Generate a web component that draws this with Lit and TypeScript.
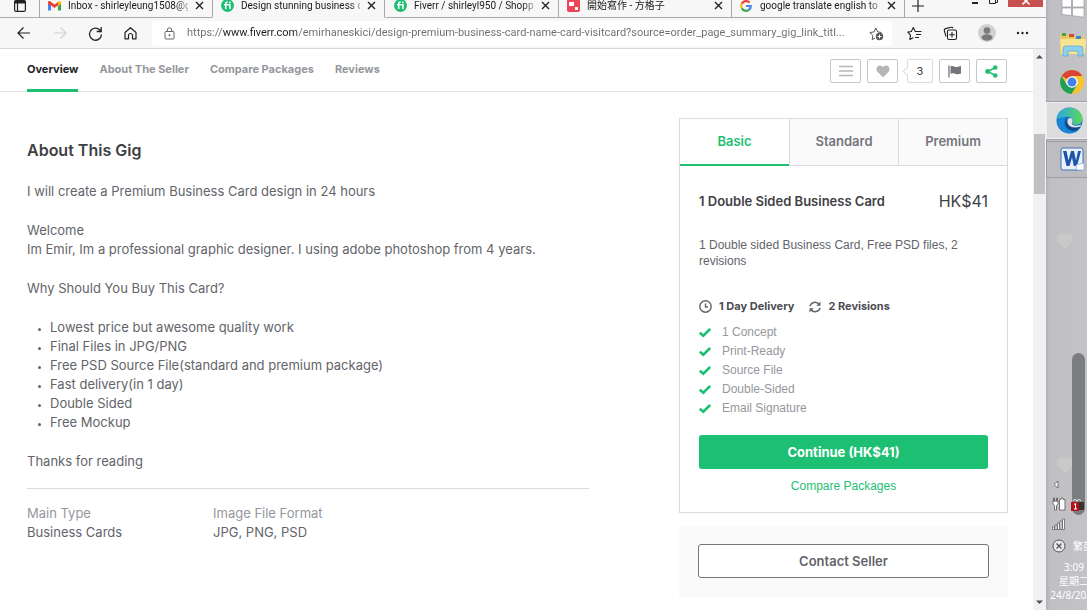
import { LitElement, html, css, svg, nothing } from "lit";
import { customElement, state } from "lit/decorators.js";
import { classMap } from "lit/directives/class-map.js";

const closeIcon = html`<svg width="9" height="9" viewBox="0 0 9 9"><path d="M1 1l7 7M8 1l-7 7" stroke="#222" stroke-width="1.4"/></svg>`;

const fiverrIcon = html`<svg width="13" height="13" viewBox="0 0 13 13"><circle cx="6.5" cy="6.5" r="6.5" fill="#1dbf73"/><path d="M3 5.7h5.900V10M4.700 10V5c0-1.300.6-1.900 2-1.900" fill="none" stroke="#fff" stroke-width="1.500"/><circle cx="8.900" cy="3.400" r=".9" fill="#fff"/></svg>`;

const gmailIcon = html`<svg width="13" height="10" viewBox="0 0 13 10"><path d="M0 1.500V9.500h3V4z" fill="#4285f4"/><path d="M13 1.500V9.500h-3V4z" fill="#34a853"/><path d="M0 1.500C0 .2 1.500-.3 2.500.5L6.500 3.500 10.500.5V4L6.500 7 2.500 4v1L0 3z" fill="#ea4335"/><path d="M10 1l.8-.6C11.800-.3 13 .2 13 1.500V3l-3 2z" fill="#fbbc04"/></svg>`;

const matterIcon = html`<svg width="13" height="13" viewBox="0 0 13 13"><rect width="13" height="13" rx="2" fill="#ee4458"/><path d="M2 3h5v4H2zM8 8h3v3H8z" fill="#fff"/></svg>`;

const googleIcon = html`<svg width="12" height="12" viewBox="0 0 12 12" fill="none" stroke-width="2.200"><path d="M9.600 2.600A4.800 4.800 0 0 0 1.800 3.800" stroke="#ea4335"/><path d="M1.800 3.800a4.800 4.800 0 0 0 0 4.400" stroke="#fbbc05"/><path d="M1.800 8.200a4.800 4.800 0 0 0 7.300 1.500" stroke="#34a853"/><path d="M9.100 9.700A4.800 4.800 0 0 0 10.800 6H6" stroke="#4285f4"/></svg>`;

const tabs = [
  { title: "Inbox - shirleyleung1508@g", icon: gmailIcon },
  { title: "Design stunning business ca", icon: fiverrIcon },
  { title: "Fiverr / shirleyl950 / Shoppin", icon: fiverrIcon },
  { title: "開始寫作 - 方格子", icon: matterIcon },
  { title: "google translate english to t", icon: googleIcon },
];

@customElement("browser-tabs")
export class BrowserTabs extends LitElement {
  static styles = css`
    :host { display: block; }
    .strip { display: flex; height: 18px; overflow: hidden; background: #f7f7f8; font: 10px/16px Roboto, "Noto Sans CJK TC", sans-serif; color: #1b1b1b; }
    .lead, .tab, .rest { box-sizing: border-box; display: flex; align-items: center; border-bottom: 1px solid #ababab; padding-bottom: 6px; }
    .lead { width: 39px; padding-left: 14px; flex: none; }
    .tab { width: 173px; flex: none; padding-left: 8px; padding-right: 8px; border-left: 1px solid #a8a8a8; gap: 7px; }
    .icon { display: flex; flex: none; width: 13px; }
    .title { flex: 1; white-space: nowrap; min-width: 0; -webkit-mask-image: linear-gradient(90deg, #000 108px, transparent 126px); mask-image: linear-gradient(90deg, #000 108px, transparent 126px); }
    .active { border-bottom-color: #f7f7f8; border-right: 1px solid #a8a8a8; }
    .after { border-left-color: transparent; }
    .plain { border: 0; background: none; padding: 0; display: flex; }
    .rest { flex: 1; border-left: 1px solid #a8a8a8; padding-left: 7px; justify-content: space-between; }
    .controls { display: flex; align-items: flex-end; align-self: flex-start; gap: 10px; height: 7px; padding-right: 3px; }
    .close { width: 35px; height: 7px; background: #c75050; border: 0; padding: 0; display: flex; justify-content: center; align-items: flex-start; overflow: hidden; }
  `;
  render() {
    return html`<div class="strip">
      <div class="lead"><button class="plain" aria-label="Tab actions"><svg width="12" height="12" viewBox="0 0 12 12" fill="none" stroke="#222" stroke-width="1.200"><rect x=".6" y=".6" width="10.800" height="10.800" rx="1.500"/><path d="M.6 2h10.800" stroke-width="3"/><path d="M3.500 3v8"/></svg></button></div>
      ${tabs.map((t, i) => html`<div class=${classMap({ tab: true, active: i === 1, after: i === 2 })}>
        <span class="icon">${t.icon}</span><span class="title">${t.title}</span>
        <button class="plain" aria-label="Close tab">${closeIcon}</button></div>`)}
      <div class="rest">
        <button class="plain" aria-label="New tab"><svg width="12" height="12" viewBox="0 0 12 12"><path d="M6 0v12M0 6h12" stroke="#222" stroke-width="1.200"/></svg></button>
        <div class="controls">
          <button class="plain" aria-label="Minimize"><svg width="8" height="6" viewBox="0 0 8 6"><path d="M1 2h6" stroke="#222" stroke-width="2"/></svg></button>
          <button class="plain" aria-label="Restore"><svg width="9" height="11" viewBox="0 0 9 11" fill="none" stroke="#222"><path d="M.5 2.500h6v5h-6zM2.500 2.500v-2h6v6h-2"/></svg></button>
          <button class="close" aria-label="Close"><svg width="8" height="6" viewBox="0 0 8 6"><path d="M.5-2.500l7 7M7.500-2.500l-7 7" stroke="#fff" stroke-width="1.600"/></svg></button>
        </div>
      </div>
    </div>`;
  }
}

@customElement("browser-toolbar")
export class BrowserToolbar extends LitElement {
  static styles = css`
    :host { display: block; }
    .bar { display: flex; align-items: center; height: 30px; background: #f7f7f7; border-bottom: 1px solid #d9d9d9; }
    .group { display: flex; align-items: center; gap: 20px; padding: 0 14px 0 16px; flex: none; }
    .tools { padding: 0 17px 0 15px; }
    button { border: 0; background: none; padding: 0; display: flex; }
    .address { flex: 1; min-width: 0; display: flex; align-items: center; gap: 12px; height: 25px; padding: 0 8px 0 12px; background: #fff; border-radius: 3px; }
    .url { flex: 1; min-width: 0; border: 0; padding: 0; outline: 0; font: 11px/20px Roboto, sans-serif; color: transparent; -webkit-text-fill-color: transparent; background: linear-gradient(90deg, #6c6c6c 36px, #1c1c1c 36px, #1c1c1c 110px, #6c6c6c 110px); -webkit-background-clip: text; background-clip: text; }
  `;
  render() {
    return html`<div class="bar">
      <div class="group">
        <button aria-label="Back"><svg width="16" height="14" viewBox="0 0 16 14" fill="none" stroke="#222" stroke-width="1.200"><path d="M14 7H2M7.500 1.500L2 7l5.500 5.500"/></svg></button>
        <button aria-label="Forward"><svg width="16" height="14" viewBox="0 0 16 14" fill="none" stroke="#d0d0d0" stroke-width="1.200"><path d="M2 7h12M8.500 1.500L14 7l-5.500 5.500"/></svg></button>
        <button aria-label="Refresh"><svg width="15" height="15" viewBox="0 0 15 15" fill="none" stroke="#222" stroke-width="1.300"><path d="M13.200 6.300A6 6 0 1 0 13.500 8.500M13.200 1v4.500H8.700"/></svg></button>
        <button aria-label="Home"><svg width="15" height="15" viewBox="0 0 15 15" fill="none" stroke="#222" stroke-width="1.200"><path d="M2 6.500L7.500 1.700 13 6.500v6.300H9.500V9.500a2 2 0 0 0-4 0v3.300H2z" stroke-linejoin="round"/></svg></button>
      </div>
      <div class="address">
        <svg width="11" height="13" viewBox="0 0 11 13" fill="none" stroke="#666"><rect x="1" y="4.500" width="9" height="7.500" rx="1"/><path d="M3.300 4.500V3a2.200 2.200 0 0 1 4.400 0v1.500"/><circle cx="5.500" cy="8.200" r=".6" fill="#666"/></svg>
        <input class="url" aria-label="Address" readonly value="https://www.fiverr.com/emirhaneskici/design-premium-business-card-name-card-visitcard?source=order_page_summary_gig_link_titl...">
        <button aria-label="Add to favorites"><svg width="15" height="15" viewBox="0 0 15 15" fill="none" stroke="#555"><path d="M6 12.200l-2.800 1.300.6-4L1 6.500l4-.6L6.800 2l1.900 3.900 3.800.6" stroke-linejoin="round"/><circle cx="10.500" cy="10.500" r="3.700" fill="#555" stroke="none"/><path d="M10.500 8.500v4M8.500 10.500h4" stroke="#fff"/></svg></button>
      </div>
      <div class="group tools">
        <button aria-label="Favorites"><svg width="16" height="15" viewBox="0 0 16 15" fill="none" stroke="#222" stroke-width="1.100"><path d="M9 5.500h-.7L6.300 1.500l-2 4-3.500.6 2.700 3-.6 4.400L6.300 11.500M9 5.500h5.500M9 8.500h5M8 11.500h4" stroke-linejoin="round"/></svg></button>
        <button aria-label="Collections"><svg width="15" height="15" viewBox="0 0 15 15" fill="none" stroke="#222" stroke-width="1.100"><rect x="4.500" y="4" width="9" height="9.500" rx="1.500"/><path d="M3 10.500L1.300 4.500Q1 3 2.500 2.600L8 1.300q1.500-.3 2 1M9 6v5.500M6.300 8.800h5.500"/></svg></button>
        <button aria-label="Profile"><svg width="18" height="18" viewBox="0 0 18 18"><circle cx="9" cy="9" r="9" fill="#d2d0ce"/><circle cx="9" cy="6.500" r="3.300" fill="#7c7a78"/><path d="M3.500 14c0-5 11-5 11 0-2.500 3.500-8.500 3.500-11 0z" fill="#7c7a78"/></svg></button>
        <button aria-label="More"><svg width="13" height="4" viewBox="0 0 13 4" fill="#222"><circle cx="2" cy="2" r="1.200"/><circle cx="6.500" cy="2" r="1.200"/><circle cx="11" cy="2" r="1.200"/></svg></button>
      </div>
    </div>`;
  }
}

@customElement("gig-header")
export class GigHeader extends LitElement {
  static styles = css`
    :host { display: block; font-family: Inter, sans-serif; }
    .bar { box-sizing: border-box; display: flex; justify-content: space-between; height: 43px; padding: 0 26px 0 27px; border-bottom: 1px solid #e4e5e7; }
    nav { display: flex; gap: 21px; }
    a { box-sizing: border-box; height: 43px; padding-top: 12px; border-bottom: 3px solid transparent; font-size: 11px; line-height: 16px; font-weight: 700; color: #95979d; text-decoration: none; }
    .on { color: #222325; border-bottom-color: #1dbf73; }
    .actions { display: flex; gap: 6px; padding-top: 10px; }
    button, .count { box-sizing: border-box; width: 31px; height: 24px; padding: 0; border: 1px solid #c5c6c9; border-radius: 2px; background: #fff; display: flex; align-items: center; justify-content: center; }
    .count { position: relative; width: 26px; margin-left: 3px; border-color: #dadbdd; font-size: 11px; color: #404145; }
    .count::before { content: ""; position: absolute; left: -4px; top: 8px; width: 6px; height: 6px; background: #fff; border-left: 1px solid #dadbdd; border-bottom: 1px solid #dadbdd; transform: rotate(45deg); }
  `;
  render() {
    return html`<header class="bar">
      <nav>${["Overview", "About The Seller", "Compare Packages", "Reviews"].map((t, i) => html`<a href="#" class=${i === 0 ? "on" : nothing}>${t}</a>`)}</nav>
      <div class="actions">
        <button aria-label="Menu"><svg width="14" height="12" viewBox="0 0 14 12"><path d="M0 1.500h14M0 6h14M0 10.500h14" stroke="#b5b6ba" stroke-width="1.300"/></svg></button>
        <button aria-label="Save"><svg width="14" height="13" viewBox="0 0 14 13"><path d="M7 12.500L1.200 6.500C-.8 3.500 1.500.5 4 .5c1.300 0 2.400.7 3 1.800C7.600 1.200 8.700.5 10 .5c2.500 0 4.800 3 2.800 6z" fill="#b5b6ba"/></svg></button>
        <span class="count">3</span>
        <button aria-label="Report"><svg width="14" height="13" viewBox="0 0 14 13"><path d="M1 .5v12" stroke="#74767e" stroke-width="1.300"/><path d="M2.500 1.500C5 0 6.500 2.500 9 2c1.500 0 2.500-.8 4-1v7.500c-2 .5-3 1-5 .5S5 7.500 2.500 8.800z" fill="#74767e"/></svg></button>
        <button aria-label="Share"><svg width="13" height="13" viewBox="0 0 13 13"><path d="M10.500 2.500l-8 4 8 4" fill="none" stroke="#1dbf73" stroke-width="1.500"/><g fill="#1dbf73"><circle cx="10.300" cy="2.500" r="2.200"/><circle cx="2.600" cy="6.500" r="2.400"/><circle cx="10.300" cy="10.500" r="2.200"/></g></svg></button>
      </div>
    </header>`;
  }
}

@customElement("package-panel")
export class PackagePanel extends LitElement {
  @state() private selected = 0;
  static styles = css`
    :host { display: block; font-family: Inter, sans-serif; color: #404145; }
    button { font-family: inherit; }
    .card { border: 1px solid #dadbdd; background: #fff; }
    .tabs { display: grid; grid-template-columns: repeat(3, 1fr); }
    .tab { height: 47px; padding: 0 0 2px; border: 0; border-bottom: 1px solid #dadbdd; border-left: 1px solid #dadbdd; background: #fafafa; color: #74767e; font-size: 13px; line-height: 20px; font-weight: 600; }
    .tab:first-child { border-left: 0; }
    .on { background: #fff; color: #1dbf73; border-bottom: 2px solid #1dbf73; padding-bottom: 1px; }
    .body { padding: 25px 19px 18px; }
    .head { display: flex; justify-content: space-between; align-items: center; }
    h3 { margin: 0; font-size: 13px; line-height: 20px; font-weight: 600; }
    .price { font-size: 16px; line-height: 20px; }
    .about, ul, .compare { font-family: "Liberation Sans", sans-serif; font-size: 12px; }
    .about { margin: 26px 0 0; line-height: 16px; color: #62646a; }
    .terms { display: flex; gap: 15px; margin-top: 28px; font-size: 11px; line-height: 19px; font-weight: 700; color: #4c4d53; }
    .term { display: flex; align-items: center; gap: 7px; }
    ul { list-style: none; margin: 7px 0 0; padding: 0; }
    li { display: flex; align-items: center; gap: 11px; line-height: 19px; color: #95979d; }
    .buy { display: block; width: 100%; height: 34px; margin-top: 17px; border: 0; border-radius: 3px; background: #1dbf73; color: #fff; font-size: 13px; font-weight: 700; }
    .compare { display: block; margin-top: 9px; text-align: center; line-height: 16px; color: #1dbf73; text-decoration: none; }
    .contact { margin-top: 13px; padding: 18px 19px 19px; background: #fafafa; }
    .ask { display: block; width: 100%; height: 34px; border: 1px solid #74767e; border-radius: 3px; background: #fff; color: #62646a; font-size: 13px; font-weight: 600; }
  `;
  render() {
    return html`<section class="card">
        <div class="tabs">${["Basic", "Standard", "Premium"].map((t, i) => html`<button class=${classMap({ tab: true, on: i === this.selected })} @click=${() => (this.selected = i)}>${t}</button>`)}</div>
        <div class="body">
          <div class="head"><h3>1 Double Sided Business Card</h3><span class="price">HK$41</span></div>
          <p class="about">1 Double sided Business Card, Free PSD files, 2 revisions</p>
          <div class="terms">
            <span class="term"><svg width="13" height="13" viewBox="0 0 13 13" fill="none" stroke="#62646a" stroke-width="1.400"><circle cx="6.500" cy="6.500" r="5.700"/><path d="M6.500 3.500V7H9"/></svg>1 Day Delivery</span>
            <span class="term"><svg width="12" height="12" viewBox="0 0 12 12" fill="none" stroke="#62646a" stroke-width="1.500"><path d="M1 5.200A5 5 0 0 1 10 3.500M11 6.800A5 5 0 0 1 2 8.500"/><path d="M11.500.5v4.200H7.300zM.5 11.500V7.300h4.200z" fill="#62646a" stroke="none"/></svg>2 Revisions</span>
          </div>
          <ul>${["1 Concept", "Print-Ready", "Source File", "Double-Sided", "Email Signature"].map((t) => html`<li><svg width="12" height="10" viewBox="0 0 12 10"><path d="M.8 4.700L4.300 7.800 11.200 1" fill="none" stroke="#1dbf73" stroke-width="2.600"/></svg>${t}</li>`)}</ul>
          <button class="buy">Continue (HK$41)</button>
          <a class="compare" href="#">Compare Packages</a>
        </div>
      </section>
      <div class="contact"><button class="ask">Contact Seller</button></div>`;
  }
}

@customElement("gig-page")
export class GigPage extends LitElement {
  static styles = css`
    :host { display: block; background: #fff; }
    main { display: grid; grid-template-columns: minmax(0, 562px) 329px; justify-content: space-between; padding: 26px 25px 0 27px; font-family: Inter, sans-serif; }
    article { padding-top: 20px; font-size: 13px; line-height: 19px; color: #62646a; }
    h2 { margin: 0 0 20px; font-size: 16px; line-height: 24px; font-weight: 600; color: #404145; }
    p { margin: 0 0 20px; }
    ul { list-style: none; margin: 0 0 20px; padding: 0; }
    li { display: flex; align-items: center; gap: 9px; padding-left: 11px; }
    li::before { content: ""; width: 3px; height: 3px; border-radius: 50%; background: #62646a; margin-top: 3px; }
    .closing { margin-bottom: 17px; }
    dl { display: grid; grid-template-columns: 186px 1fr; margin: 0; padding-top: 15px; border-top: 1px solid #dadbdd; }
    dt { color: #95979d; }
    dd { margin: 0; }
  `;
  render() {
    return html`<gig-header></gig-header>
      <main>
        <article>
          <h2>About This Gig</h2>
          <p>I will create a Premium Business Card design in 24 hours</p>
          <p>Welcome<br>Im Emir, Im a professional graphic designer. I using adobe photoshop from 4 years.</p>
          <p>Why Should You Buy This Card?</p>
          <ul>${["Lowest price but awesome quality work", "Final Files in JPG/PNG", "Free PSD Source File(standard and premium package)", "Fast delivery(in 1 day)", "Double Sided", "Free Mockup"].map((t) => html`<li>${t}</li>`)}</ul>
          <p class="closing">Thanks for reading</p>
          <dl><div><dt>Main Type</dt><dd>Business Cards</dd></div><div><dt>Image File Format</dt><dd>JPG, PNG, PSD</dd></div></dl>
        </article>
        <package-panel></package-panel>
      </main>`;
  }
}

const heart = svg`<path d="M9 17L2 9.500C-1.500 4 5-1.500 9 3.500c4-5 10.500.5 7 6z" fill="#c9c9c8"/>`;

@customElement("desktop-taskbar")
export class DesktopTaskbar extends LitElement {
  static styles = css`
    :host { display: block; position: relative; overflow: hidden; background: linear-gradient(90deg, #b2b2b6, #c0c0c4 4px, #c3c3c7); }
    .col { box-sizing: border-box; width: 56px; height: 100%; display: flex; flex-direction: column; justify-content: space-between; }
    button { box-sizing: border-box; display: flex; align-items: center; border: 0; background: none; padding: 0 0 0 13px; width: 56px; }
    .start { height: 18px; padding-left: 15px; }
    .folder { height: 54px; }
    .chrome { height: 20px; margin-bottom: 10px; }
    .tile { height: 37px; border: 1px solid #9b9ba0; margin-bottom: 2px; background: #bdbdc1; }
    .current { background: #dcdcdf; border-color: #f0f0f2; padding-left: 9px; outline: 1px solid #a0a0a4; }
    .tray { display: flex; flex-direction: column; color: #fff; font: 10px/14px "Noto Sans", "Noto Sans CJK TC", sans-serif; padding-bottom: 8px; text-align: center; }
    .row { display: flex; align-items: center; gap: 5px; height: 20px; padding-left: 6px; }
    .lang { height: 24px; gap: 7px; margin-bottom: 2px; white-space: nowrap; }
    .thumb { position: absolute; right: 2px; top: 353px; width: 13px; height: 162px; border-radius: 7px; background: #7c7d80; }
    .gift { position: absolute; right: 3px; top: 498px; }
    .heart { position: absolute; left: 10px; top: 232px; }
    .low { top: 456px; }
  `;
  render() {
    return html`<div class="col">
        <div>
          <button class="start" aria-label="Start"><svg width="24" height="20" viewBox="0 0 24 20" fill="#fff" stroke="#8f8f94" stroke-width=".6"><path d="M1 0h9.500v8H1zM11.500 0H23v8H11.500zM1 9h9.500v7.500L1 15.500zM11.500 9H23v9.200l-11.500-1.500z"/></svg></button>
          <button class="folder" aria-label="File Explorer"><svg width="28" height="28" viewBox="0 0 28 28"><path d="M1 4q0-1 1-1h9l2 2h12q1 0 1 1v17H1z" fill="#e8c767"/><path d="M3 2h4v3H3z" fill="#48a04a"/><path d="M10 3h5v3h-5z" fill="#cf4a3a"/><path d="M17 5h5v3h-5z" fill="#3f86cf"/><path d="M1 8h26l-1 15H2z" fill="#f8e38f"/><path d="M4 25v-7q0-3 3-3h14q3 0 3 3v7h-5v-5H9v5z" fill="#8fd0ef" stroke="#5aa9d4" stroke-width=".8"/></svg></button>
          <button class="chrome" aria-label="Chrome"><svg width="26" height="26" viewBox="0 0 26 26"><circle cx="13" cy="13" r="12" fill="#f7c52b"/><path d="M13 13L2.600 7A12 12 0 0 1 23.400 7H13z" fill="#dc4437"/><path d="M2.600 7A12 12 0 0 0 12.500 25L18 16 8 16z" fill="#1fa05a"/><circle cx="13" cy="13" r="5.800" fill="#fff"/><circle cx="13" cy="13" r="4.500" fill="#4382ec"/></svg></button>
          <button class="tile current" aria-label="Edge"><svg width="27" height="27" viewBox="0 0 27 27"><defs><linearGradient id="g" x1="0" x2="1"><stop stop-color="#2aa8e0"/><stop offset="1" stop-color="#5fd65a"/></linearGradient></defs><circle cx="13.500" cy="13.500" r="13" fill="#1272c4"/><path d="M.8 12C2-3 26-3 26.500 12c0 6-8 7-10.500 4.500 3-3-1-7.500-6-6.500-4 .5-7 1.500-9.200 2z" fill="url(#g)"/><path d="M9.500 10.500C5 16 11 25 21 24c-8 5-19 1-20-10 2-3 5-4 8.500-3.500z" fill="#1a86d8"/><path d="M12.500 11c-4 5 2 11 12 8.500-2 3-5 4.500-8 4.500C9 23 6.500 14 12.500 11z" fill="#114a8b"/><path d="M12 12c3-3 6 1 4 4-1 2 4 4 9 1.500l-.5 2C15 23 9.500 17 12 12z" fill="#dfe3e8"/></svg></button>
          <button class="tile" aria-label="Word"><svg width="25" height="25" viewBox="0 0 25 25"><rect x="1" y="1" width="22" height="22" rx="2" fill="#e9f1fb" stroke="#3f6fb5"/><path d="M3 4h3.500l2 9.500L11 4h3l2 9.500L18 4h3l-4 15h-3.200L12 10.500 9.500 19H6.500z" fill="#1f55a8"/><path d="M16 18l8-2v7h-7z" fill="#fff" stroke="#8aa8d2" stroke-width=".7"/></svg></button>
        </div>
        <div class="tray">
          <div class="row"><svg width="8" height="9" viewBox="0 0 8 9"><path d="M6 1L2 4.500 6 8z" fill="#fff" stroke="#555" stroke-width=".8"/></svg></div>
          <div class="row"><svg width="14" height="14" viewBox="0 0 14 14" fill="#fff" stroke="#555" stroke-width=".8"><path d="M1 4h5v3L4.500 8.500V13h-2V8.500L1 7zM1.500 1h1v3h-1zM4.500 1h1v3h-1zM7.500 2.500h1.500V1h2v1.500H13V13H7.500z"/></svg></div>
          <div class="row"><svg width="14" height="12" viewBox="0 0 14 12" fill="#fff" stroke="#555" stroke-width=".7"><path d="M.5 9h2v2.500h-2zM3 7h2v4.500H3zM5.500 5h2v6.500h-2zM8 3h2v8.500H8zM10.500 1h2v10.500h-2z"/></svg></div>
          <div class="row lang"><svg width="14" height="14" viewBox="0 0 14 14" fill="none" stroke="#555"><circle cx="7" cy="7" r="6" fill="#e9e9eb"/><path d="M4.500 4.500l5 5M9.500 4.500l-5 5" stroke-width="1.300"/></svg>繁英</div>
          <span>3:09</span><span>星期二</span><span>24/8/2021</span>
        </div>
      </div>
      <svg class="heart" width="18" height="18">${heart}</svg>
      <svg class="heart low" width="18" height="18">${heart}</svg>
      <div class="thumb"></div>
      <svg class="gift" width="13" height="14" viewBox="0 0 13 14"><path d="M7 4h6v8H7z" fill="#333"/><path d="M2 3q2-3 4 0 2-3 4 0" fill="none" stroke="#ddd" stroke-width="1.200"/><path d="M0 4h8v9H0z" fill="#b5121b"/><path d="M3 6.500l1.500-1V11M3 11h3" fill="none" stroke="#fff"/></svg>`;
  }
}

@customElement("app-root")
export class AppRoot extends LitElement {
  static styles = css`
    :host { display: block; }
    .desktop { display: grid; grid-template-columns: minmax(0, 1fr) 41px; height: 100vh; overflow: hidden; }
    .window { display: flex; flex-direction: column; min-height: 0; }
    .view { flex: 1; min-height: 0; display: grid; grid-template-columns: minmax(0, 1fr) 13px; overflow: hidden; }
    .page { min-height: 0; overflow: hidden; }
    .scroll { display: flex; flex-direction: column; align-items: center; background: #f1f1f1; padding: 5px 0; }
    .track { flex: 1; align-self: stretch; padding: 75px 1px 0; }
    .thumb { height: 60px; background: #c1c1c1; }
  `;
  render() {
    return html`<div class="desktop">
      <div class="window">
        <browser-tabs></browser-tabs>
        <browser-toolbar></browser-toolbar>
        <div class="view">
          <div class="page"><gig-page></gig-page></div>
          <div class="scroll">
            <svg width="7" height="5" viewBox="0 0 7 5"><path d="M0 4.500L3.500 1 7 4.500z" fill="#505050"/></svg>
            <div class="track"><div class="thumb"></div></div>
            <svg width="7" height="5" viewBox="0 0 7 5"><path d="M0 .5L3.500 4 7 .5z" fill="#505050"/></svg>
          </div>
        </div>
      </div>
      <desktop-taskbar></desktop-taskbar>
    </div>`;
  }
}
